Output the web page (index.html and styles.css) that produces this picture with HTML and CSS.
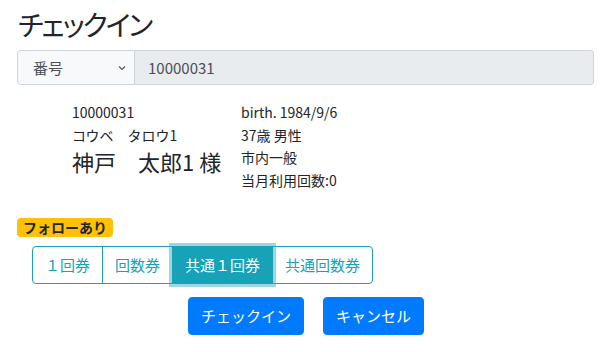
FILE: index.html
```html
<!DOCTYPE html>
<html lang="ja">
<head>
    <meta charset="UTF-8">
    <meta name="viewport" content="width=device-width, initial-scale=1.0">
    <title>チェックイン</title>
    <link rel="stylesheet" href="styles.css">
</head>
<body>

<div class="container">
    <h2 class="title">チェックイン</h2>

    <div class="input-group">
        <div class="select-box">
            <span>番号</span>
            <svg class="caret" width="8" height="6" viewBox="0 0 8 6"><path d="M1 1.5 L4 4.5 L7 1.5" fill="none" stroke="#555" stroke-width="1.2"/></svg>
        </div>
        <div class="number-input">10000031</div>
    </div>

    <div class="member">
        <div class="member-left">
            <div class="line">10000031</div>
            <div class="line">コウベ　タロウ1</div>
            <div class="name">神戸　太郎1 様</div>
        </div>
        <div class="member-right">
            <div class="line">birth. 1984/9/6</div>
            <div class="line">37歳 男性</div>
            <div class="line">市内一般</div>
            <div class="line">当月利用回数:0</div>
        </div>
    </div>

    <span class="badge">フォローあり</span>

    <div class="btn-group">
        <button class="btn-outline">１回券</button>
        <button class="btn-outline">回数券</button>
        <button class="btn-outline active">共通１回券</button>
        <button class="btn-outline">共通回数券</button>
    </div>

    <div class="actions">
        <button class="btn-primary">チェックイン</button>
        <button class="btn-primary">キャンセル</button>
    </div>
</div>

</body>
</html>
```

FILE: styles.css
```css
body {
    font-family: "Noto Sans CJK JP", "Noto Sans", sans-serif;
    color: #212529;
    background-color: #fff;
    margin: 0;
    padding: 0;
}

.container {
    padding: 6px 14px 0 17px;
}

.title {
    font-size: 28px;
    font-weight: normal;
    line-height: 36px;
    margin: 0 0 8px 1px;
    letter-spacing: -2px;
    font-feature-settings: "palt";
}

.input-group {
    display: flex;
    height: 35px;
    font-size: 15px;
}

.select-box {
    width: 118px;
    box-sizing: border-box;
    display: flex;
    align-items: center;
    justify-content: space-between;
    padding: 0 8px 0 15px;
    background-color: #f8f9fa;
    border: 1px solid #ced4da;
    border-radius: 4px 0 0 4px;
    color: #495057;
}

.caret {
    margin-top: 1px;
}

.number-input {
    flex: 1;
    display: flex;
    align-items: center;
    padding-left: 13px;
    background-color: #e9ecef;
    border: 1px solid #ced4da;
    border-left: none;
    border-radius: 0 4px 4px 0;
    color: #495057;
}

.member {
    display: flex;
    padding: 16px 0 0 55px;
    font-size: 14px;
}

.member-left {
    width: 169px;
}

.line {
    line-height: 22.5px;
}

.name {
    font-size: 22px;
    line-height: 30px;
}

.badge {
    display: inline-block;
    margin-top: 27px;
    padding: 0 6px;
    background-color: #ffc107;
    color: #212529;
    font-size: 14px;
    font-weight: bold;
    line-height: 19px;
    border-radius: 4px;
}

.btn-group {
    display: flex;
    margin: 8px 0 0 15px;
}

button {
    font-family: inherit;
    font-size: 15px;
    line-height: 22px;
    padding: 7px 12px;
    cursor: pointer;
}

.btn-outline {
    background-color: #fff;
    color: #17a2b8;
    border: 1px solid #17a2b8;
    border-radius: 0;
    margin-left: -1px;
}

.btn-outline:first-child {
    margin-left: 0;
    border-radius: 4px 0 0 4px;
}

.btn-outline:last-child {
    border-radius: 0 4px 4px 0;
}

.btn-outline.active {
    background-color: #17a2b8;
    color: #fff;
    box-shadow: 0 0 0 3px rgba(58, 176, 195, 0.5);
    position: relative;
    z-index: 1;
}

.actions {
    display: flex;
    gap: 19px;
    margin: 13px 0 0 171px;
}

.btn-primary {
    background-color: #007bff;
    color: #fff;
    border: 1px solid #007bff;
    border-radius: 4px;
}
```
